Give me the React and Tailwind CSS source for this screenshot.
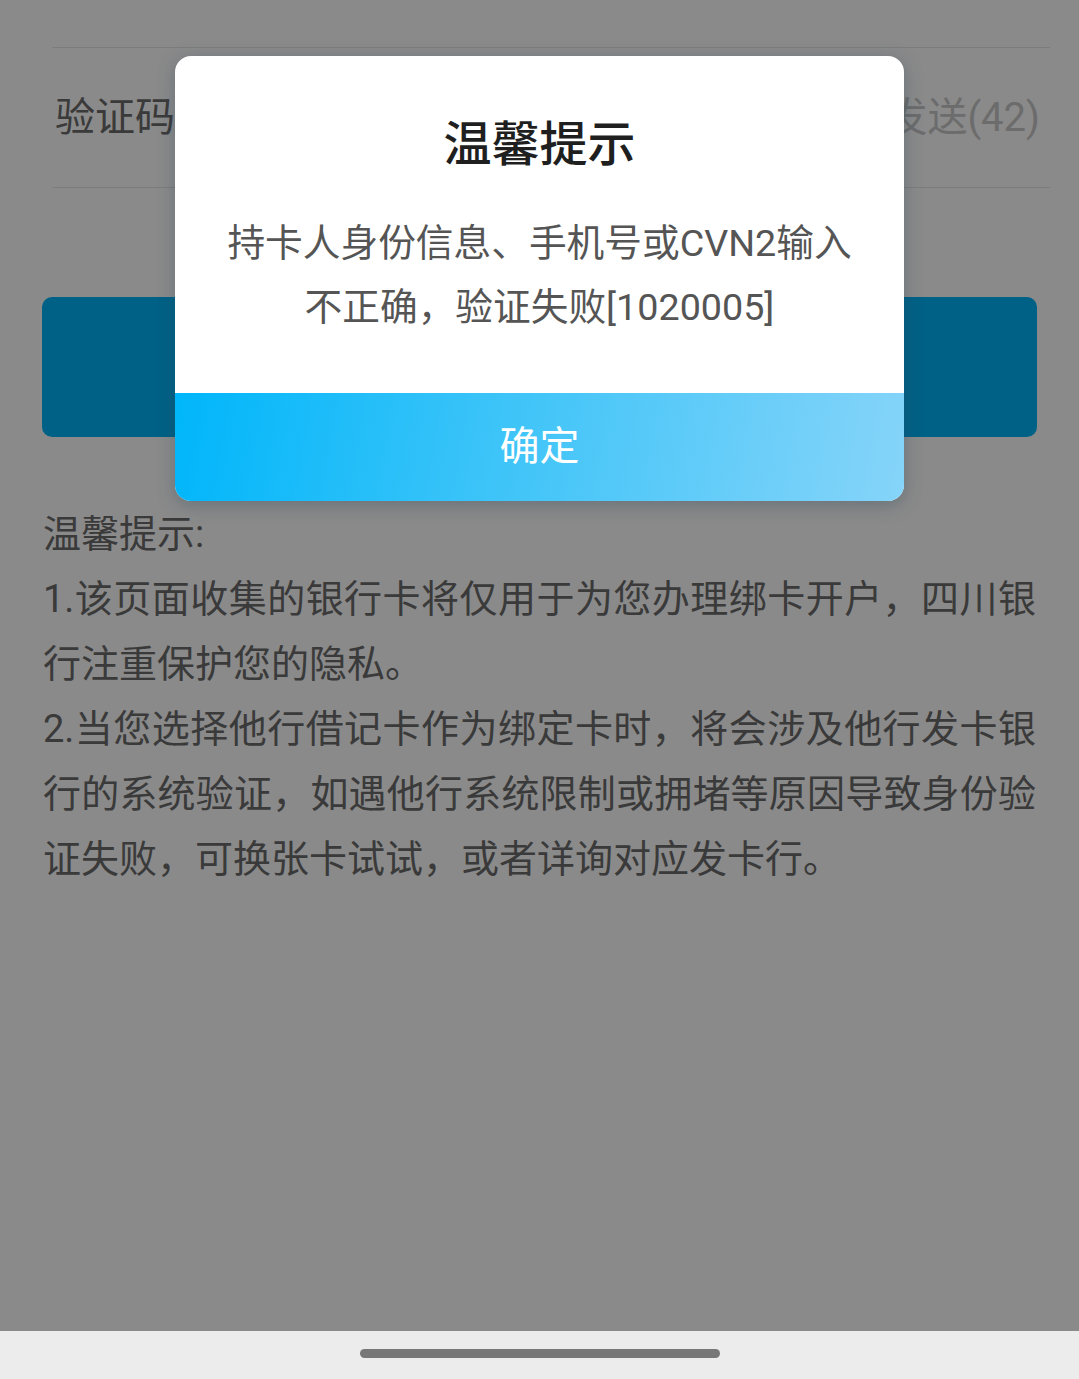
import React from 'react'

const font = { fontFamily: 'Roboto, "Noto Sans CJK SC", sans-serif' }

const tips = [
  '1.该页面收集的银行卡将仅用于为您办理绑卡开户，四川银行注重保护您的隐私。',
  '2.当您选择他行借记卡作为绑定卡时，将会涉及他行发卡银行的系统验证，如遇他行系统限制或拥堵等原因导致身份验证失败，可换张卡试试，或者详询对应发卡行。',
]

function AlertDialog() {
  return (
    <div className="absolute inset-0 bg-black/[0.46]">
      <div className="ml-[175px] mt-[56px] w-[729px] rounded-[16px] bg-white overflow-hidden shadow-[0_4px_18px_rgba(40,70,90,0.35)]">
        <h2 className="pt-[59px] text-center text-[48px] leading-[60px] font-medium text-[#1f1f1f]">温馨提示</h2>
        <p className="mt-[36px] px-[46px] text-center text-[37.7px] leading-[64px] text-[#555]">
          持卡人身份信息、手机号或CVN2输入不正确，验证失败[1020005]
        </p>
        <button className="mt-[54px] block w-full h-[108px] bg-[linear-gradient(100deg,#00b6fa_0%,#3ec4f8_45%,#86d4f9_100%)] text-white text-[40px]">
          确定
        </button>
      </div>
    </div>
  )
}

export default function App() {
  return (
    <div className="w-[1079px] h-[1379px] flex flex-col bg-white" style={font}>
      <div className="relative h-[1331px] overflow-hidden">
        <div className="ml-[52px] mr-[29px] h-[48px] border-b border-[#e6e6e6]" />
        <div className="ml-[52px] mr-[29px] h-[140px] flex items-center justify-between border-b border-[#e6e6e6]">
          <span className="pl-[3px] text-[40px] text-[#6b6b6b]">验证码</span>
          <span className="mr-[10px] text-[40px] text-[#c8c8c8]">重新发送(42)</span>
        </div>
        <div className="mt-[109px] mx-[42px] h-[140px] rounded-[10px] bg-[#00b4f8]" />
        <div className="mt-[65px] mx-[43px] text-[38px] leading-[65px] text-[#6b6b6b] text-justify">
          <p>温馨提示:</p>
          {tips.map((t, i) => (
            <p key={i}>{t}</p>
          ))}
        </div>
        <AlertDialog />
      </div>
      <div className="flex-1 bg-[#ececec] flex justify-center pt-[18px]">
        <div className="w-[360px] h-[9px] rounded-full bg-[#777]" />
      </div>
    </div>
  )
}
